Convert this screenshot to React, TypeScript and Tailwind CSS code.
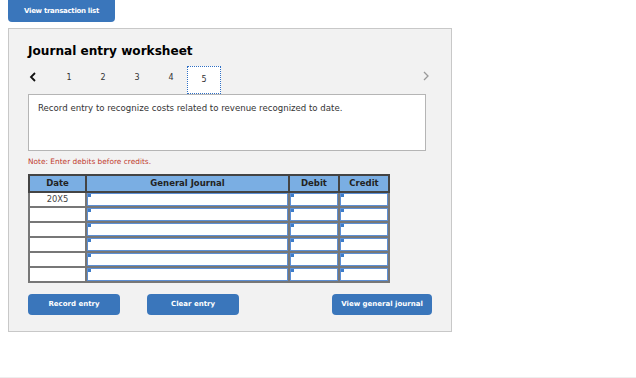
const rows = [0, 1, 2, 3, 4, 5]

const InputCell = () => (
  <td className="border-2 border-[#777] p-0 h-[15px]">
    <div className="relative h-[13px] bg-white border border-[#5d8fd4]">
      <span className="absolute left-0 top-0 w-[3px] h-[3px] bg-[#3d7cc9]" />
    </div>
  </td>
)

const App = () => {
  return (
    <div className="w-[636px] h-[378px] bg-white border-b border-[#eeeeee] font-['DejaVu_Sans',sans-serif] text-[#222]">
      <div className="flex px-2">
        <button className="block w-[107px] h-[22px] bg-[#3a76bb] text-white text-[7px] font-bold rounded-b-sm tracking-[-0.3px]">
          View transaction list
        </button>
      </div>

      <div className="mt-[6px] ml-2 w-[444px] h-[304px] bg-[#f2f2f2] border border-[#c8c8c8] px-[19px] pt-[16px]">
        <h1 className="text-[12.1px] font-bold text-black leading-none">Journal entry worksheet</h1>

        <div className="mt-[9px] flex items-end h-[28px] relative">
          <svg className="w-[20px] h-[10px] mb-[12px]" viewBox="0 0 20 10">
            <path d="M7 1 L3 5 L7 9" fill="none" stroke="#111" strokeWidth="1.8" />
          </svg>
          <div className="flex items-end text-[8px] text-[#333]">
            {[1, 2, 3, 4].map((n) => (
              <span key={n} className="w-[34px] text-center mb-[10px] pl-[8px]">{n}</span>
            ))}
            <span className="w-[34px] h-[28px] ml-[3px] bg-white border border-dotted border-[#2f6fc4] flex items-center justify-center">5</span>
          </div>
          <svg className="absolute right-[2px] top-[5px] w-[8px] h-[10px]" viewBox="0 0 8 10">
            <path d="M2 1 L6 5 L2 9" fill="none" stroke="#999" strokeWidth="1.3" />
          </svg>
        </div>

        <div className="h-[57px] bg-white border border-[#b5b5b5] px-[9px] pt-[8px] text-[8.6px] text-[#333] w-[398px] leading-tight">
          Record entry to recognize costs related to revenue recognized to date.
        </div>

        <p className="mt-[5px] text-[7.4px] text-[#c0392b]">Note: Enter debits before credits.</p>

        <table className="mt-[7px] border-collapse w-[360px] table-fixed">
          <colgroup>
            <col className="w-[57px]" />
            <col className="w-[203px]" />
            <col className="w-[50px]" />
            <col className="w-[50px]" />
          </colgroup>
          <thead>
            <tr className="h-[17px] bg-[#7aaee3] text-[8.5px] text-[#222]">
              <th className="border-2 border-[#444] font-bold">Date</th>
              <th className="border-2 border-[#444] font-bold">General Journal</th>
              <th className="border-2 border-[#444] font-bold">Debit</th>
              <th className="border-2 border-[#444] font-bold">Credit</th>
            </tr>
          </thead>
          <tbody>
            {rows.map((r) => (
              <tr key={r} className="h-[15px]">
                <td className="border-2 border-[#777] bg-white text-center text-[8.4px] text-[#444] p-0">
                  {r === 0 ? "20X5" : ""}
                </td>
                <InputCell />
                <InputCell />
                <InputCell />
              </tr>
            ))}
          </tbody>
        </table>

        <div className="mt-[11px] flex items-center">
          <button className="w-[92px] h-[21px] bg-[#3a76bb] text-white text-[7px] font-bold rounded-sm">
            Record entry
          </button>
          <button className="ml-[27px] w-[92px] h-[21px] bg-[#3a76bb] text-white text-[7px] font-bold rounded-sm">
            Clear entry
          </button>
          <button className="ml-[93px] w-[100px] h-[21px] bg-[#3a76bb] text-white text-[7px] font-bold rounded-sm">
            View general journal
          </button>
        </div>
      </div>
    </div>
  )
}

export default App
